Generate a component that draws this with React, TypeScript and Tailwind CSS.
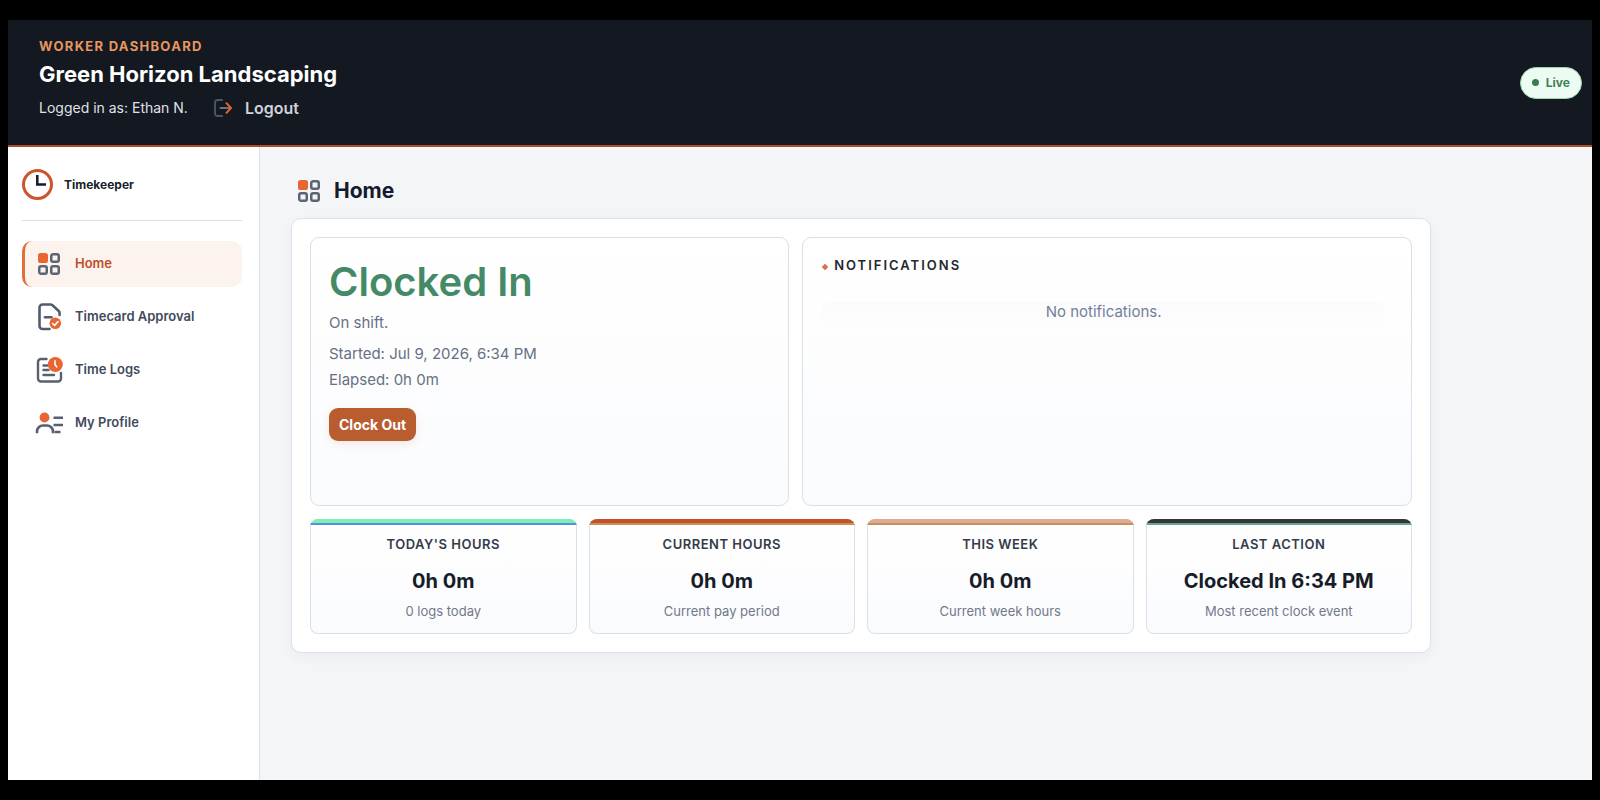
import type { ReactNode } from "react";

const SLATE = "#5b6472";
const ORANGE = "#e96534";

function HomeIcon() {
  return (
    <svg width="22" height="22" viewBox="0 0 22 22" fill="none" stroke={SLATE} strokeWidth="2.5" aria-hidden="true">
      <rect x="0" y="0" width="10" height="10" rx="2.6" fill={ORANGE} stroke="none" />
      <rect x="13.25" y="1.25" width="7.5" height="7.5" rx="1.8" />
      <rect x="1.25" y="13.25" width="7.5" height="7.5" rx="1.8" />
      <rect x="13.25" y="13.25" width="7.5" height="7.5" rx="1.8" />
    </svg>
  );
}

function ApprovalIcon() {
  return (
    <svg width="28" height="28" viewBox="0 0 28 28" fill="none" stroke="#525c6c" strokeWidth="2.6" strokeLinecap="round" strokeLinejoin="round" aria-hidden="true">
      <path d="M14.5 26H7.500a3 3 0 0 1-3-3V4.500a3 3 0 0 1 3-3h8c.8 0 1.400.3 2 .8l6.200 5.700c.6.600.9 1.300.9 2V12" />
      <path d="M10 14.200h6.500" />
      <circle cx="20.300" cy="20.300" r="5.800" fill={ORANGE} stroke="none" />
      <path d="M17.600 20.500l2 1.900 3.500-3.900" stroke="#fff" strokeWidth="1.600" />
    </svg>
  );
}

function LogsIcon() {
  return (
    <svg width="28" height="28" viewBox="0 0 28 28" fill="none" stroke="#566070" strokeWidth="2.400" strokeLinecap="round" strokeLinejoin="round" aria-hidden="true">
      <path d="M11.500 3H6a3 3 0 0 0-3 3v16.500a3 3 0 0 0 3 3h17a3 3 0 0 0 3-3V17" />
      <path d="M8.500 9.500h4M8.500 14h5M8.500 19h10.500" />
      <circle cx="20.300" cy="8.500" r="7.500" fill={ORANGE} stroke="none" />
      <path d="M20 4.800v3.700l1.700 2.400" stroke="#fff" strokeWidth="1.600" />
    </svg>
  );
}

function ProfileIcon() {
  return (
    <svg width="28" height="28" viewBox="0 0 28 28" fill="none" stroke="#566070" strokeWidth="2.600" strokeLinecap="butt" aria-hidden="true">
      <circle cx="9.500" cy="8.500" r="4.900" fill={ORANGE} stroke="none" />
      <path d="M2 24.300V22.500a6 6 0 0 1 6-6h4a6 6 0 0 1 6 6v1.800" />
      <path d="M18.500 8.800h9.500M18.500 16h9.500M19.500 23h6" />
    </svg>
  );
}

function LogoutIcon() {
  return (
    <svg width="18" height="18" viewBox="0 0 18 18" fill="none" stroke="#4b5563" strokeWidth="1.900" strokeLinecap="round" strokeLinejoin="round" aria-hidden="true">
      <path d="M8.200 1H3.500A2.500 2.500 0 0 0 1 3.500v11A2.500 2.500 0 0 0 3.500 17h4.700" />
      <path d="M6.500 9h9.500" stroke="#6b7280" />
      <path d="M12.500 4.200L17 9l-4.500 4.800" stroke={ORANGE} />
    </svg>
  );
}

function ClockIcon() {
  return (
    <svg width="31" height="31" viewBox="0 0 31 31" fill="none" aria-hidden="true">
      <circle cx="15.500" cy="15.500" r="14" stroke="#cb552c" strokeWidth="3" />
      <path d="M15.300 6v9.500h8.700" stroke="#141a26" strokeWidth="2.500" />
    </svg>
  );
}

const navItems: { label: string; icon: ReactNode; active?: boolean }[] = [
  { label: "Home", icon: <HomeIcon />, active: true },
  { label: "Timecard Approval", icon: <ApprovalIcon /> },
  { label: "Time Logs", icon: <LogsIcon /> },
  { label: "My Profile", icon: <ProfileIcon /> },
];

const stats = [
  { label: "TODAY'S HOURS", value: "0h 0m", note: "0 logs today", top: "bg-[#77f2b1]", under: "bg-[#5b8be6]" },
  { label: "CURRENT HOURS", value: "0h 0m", note: "Current pay period", top: "bg-[#c4512a]", under: "bg-[#c39255]" },
  { label: "THIS WEEK", value: "0h 0m", note: "Current week hours", top: "bg-[#deaa97]", under: "bg-[#c39255]" },
  { label: "LAST ACTION", value: "Clocked In 6:34 PM", note: "Most recent clock event", top: "bg-[#343638]", under: "bg-[#68a88a]" },
];

export default function App() {
  return (
    <div className="flex min-h-screen flex-col bg-black px-2 py-5 font-['Inter',sans-serif]">
      <div className="flex flex-1 flex-col bg-[#f4f5f7]">
        <header className="flex items-center justify-between border-b-2 border-[#b04a26] bg-[#131821] pt-4 pr-[10px] pl-[31px]">
          <div className="pb-[25px]">
            <p className="text-[13px] leading-5 font-bold tracking-[1.3px] text-[#e8965f]">WORKER DASHBOARD</p>
            <h1 className="mt-1 text-[22px] leading-7 font-bold text-white">Green Horizon Landscaping</h1>
            <div className="mt-2 flex items-center">
              <span className="text-sm leading-6 text-[#e0e2e6]">Logged in as: Ethan N.</span>
              <button type="button" className="ml-[26px] flex items-center gap-[13px] text-base leading-6 font-semibold text-[#ced2d9]">
                <LogoutIcon />
                Logout
              </button>
            </div>
          </div>
          <span className="mb-4 flex h-8 items-center gap-[7px] rounded-full border border-[#9fd3b2] bg-[#edfcf2] px-[11px] text-xs font-bold text-[#40805a]">
            <span className="size-[7px] rounded-full bg-[#3b7a52]" />
            Live
          </span>
        </header>

        <div className="flex flex-1">
          <aside className="w-[252px] shrink-0 border-r border-[#dbe1e9] bg-white pt-[22px] pr-[17px] pl-[14px]">
            <div className="flex items-center gap-[11px] border-b border-[#dbe1e9] pb-5">
              <ClockIcon />
              <span className="text-xs font-bold text-[#1a1f2b]">Timekeeper</span>
            </div>
            <nav className="mt-5 flex flex-col gap-[7px]">
              {navItems.map((item) => (
                <a
                  key={item.label}
                  href="#"
                  className={
                    item.active
                      ? "flex h-[46px] items-center gap-3 rounded-[10px] border-l-[3px] border-[#e0703a] bg-[#fdf3ee] pl-[10px] text-[13px] font-semibold text-[#bf4f26]"
                      : "flex h-[46px] items-center gap-3 rounded-[10px] border-l-[3px] border-transparent pl-[10px] text-[13px] font-semibold text-[#414a5c]"
                  }
                >
                  <span className="flex w-7 justify-center">{item.icon}</span>
                  {item.label}
                </a>
              ))}
            </nav>
          </aside>

          <main className="min-w-0 flex-1 pt-[29px] pr-8 pl-[31px]">
            <div className="flex items-center gap-[14px] pl-[7px]">
              <HomeIcon />
              <h2 className="text-[21px] leading-[30px] font-bold text-[#141b2d]">Home</h2>
            </div>

            <div className="mt-3 max-w-[1140px] rounded-[10px] border border-[#dbe2ec] bg-white p-[18px] shadow-[0_4px_14px_rgba(15,23,42,0.04)]">
              <div className="grid grid-cols-[11fr_14fr] gap-[13px]">
                <section className="min-h-[269px] rounded-[9px] border border-[#d8e0ea] bg-linear-to-b from-white to-[#fafbfd] px-[18px] pt-5">
                  <h3 className="text-[40px] leading-[48px] font-semibold text-[#448a66]">Clocked In</h3>
                  <p className="mt-1 text-[15px] leading-[26px] text-[#667083]">On shift.</p>
                  <p className="mt-[5px] text-[15px] leading-[26px] text-[#667083]">Started: Jul 9, 2026, 6:34 PM</p>
                  <p className="text-[15px] leading-[26px] text-[#667083]">Elapsed: 0h 0m</p>
                  <button type="button" className="mt-[15px] h-[33px] rounded-[9px] bg-[#b95d30] px-[10px] text-sm font-bold text-white shadow-[0_3px_8px_rgba(185,93,48,0.12)]">
                    Clock Out
                  </button>
                </section>

                <section className="min-h-[269px] rounded-[9px] border border-[#d8e0ea] bg-linear-to-b from-white to-[#fafbfd] pt-[17px] pr-[26px] pl-[19px]">
                  <h3 className="flex items-center gap-[6px] text-[13px] leading-5 font-semibold tracking-[2px] text-[#24272d]">
                    <svg width="6" height="6" viewBox="0 0 6 6" className="mt-[3px]" aria-hidden="true">
                      <path d="M3 0l3 3-3 3-3-3z" fill="#d9704c" stroke="#d9704c" strokeWidth="0.6" />
                    </svg>
                    NOTIFICATIONS
                  </h3>
                  <p className="mt-[27px] rounded-t-lg bg-linear-to-b from-[#fbfbfd] to-[#fdfdfe] text-center text-[15px] leading-5 text-[#728097]">
                    No notifications.
                  </p>
                </section>
              </div>

              <div className="mt-[13px] grid grid-cols-4 gap-3">
                {stats.map((stat) => (
                  <section key={stat.label} className="overflow-hidden rounded-lg bg-[#d8e0ea] text-center">
                    <div className={`h-1 ${stat.top}`} />
                    <div className={`h-0.5 ${stat.under}`} />
                    <div className="mx-px mb-px rounded-b-[7px] bg-linear-to-b from-white to-[#fafbfd] pt-[9px] pb-3">
                      <h4 className="text-[13px] leading-5 font-semibold tracking-[0.5px] text-[#343b4a]">{stat.label}</h4>
                      <p className="mt-[13px] text-xl leading-7 font-bold text-[#161c28]">{stat.value}</p>
                      <p className="mt-[6px] text-[13px] leading-5 text-[#71798b]">{stat.note}</p>
                    </div>
                  </section>
                ))}
              </div>
            </div>
          </main>
        </div>
      </div>
    </div>
  );
}
